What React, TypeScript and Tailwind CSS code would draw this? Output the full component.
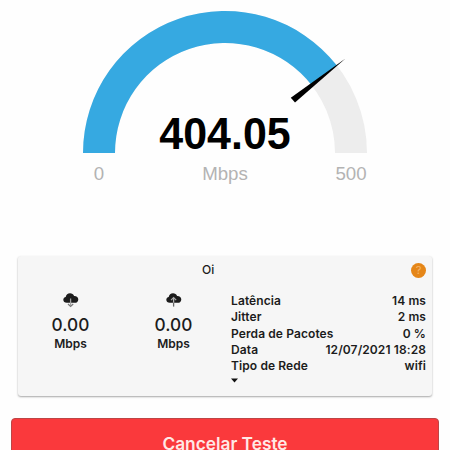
import type { ReactNode } from 'react';

const details = [
  { label: 'Latência', value: '14 ms' },
  { label: 'Jitter', value: '2 ms' },
  { label: 'Perda de Pacotes', value: '0 %' },
  { label: 'Data', value: '12/07/2021 18:28' },
  { label: 'Tipo de Rede', value: 'wifi' },
];

const CLOUD =
  'M3.8 9.8C1.700 9.800.3 8.600.3 6.800c0-1.500 1-2.600 2.400-2.800C3 1.800 4.800.2 7 .2c1.900 0 3.500 1 4.100 2.700 2.300-.2 4.200 1.300 4.200 3.500 0 2-1.500 3.400-3.600 3.400z';

const DownloadIcon = () => (
  <svg className="block" width="16" height="15" viewBox="0 0 16 15">
    <path d={CLOUD} fill="#1c1c1c" />
    <path d="M7.600 5.500v7" stroke="#a3a3a3" strokeWidth="1.300" />
    <path d="M5 11l2.600 2.400L10.200 11" fill="none" stroke="#777" strokeWidth="1.200" />
  </svg>
);

const UploadIcon = () => (
  <svg className="block" width="16" height="15" viewBox="0 0 16 15">
    <path d={CLOUD} fill="#1c1c1c" />
    <path d="M7.600 5v4.800" stroke="#b5b5b5" strokeWidth="1.300" />
    <path d="M7.600 9.800v3.800" stroke="#666" strokeWidth="1.300" />
    <path d="M5 7.200l2.600-2.600 2.600 2.600" fill="none" stroke="#aaa" strokeWidth="1.200" />
  </svg>
);

const Gauge = () => {
  return (
    <section className="h-[256px] w-full font-['Liberation_Sans',Arial,sans-serif]">
      <svg className="block" width="450" height="256" viewBox="0 0 450 256">
        <path d="M83 153A142 142 0 0 1 367 153H335A110 110 0 0 0 115 153Z" fill="#ededed" />
        <path d="M83 153A142 142 0 0 1 336.900 65.600L311.700 85.300A110 110 0 0 0 115 153Z" fill="#36a9e1" />
        <path d="M345.500 58.500L290.800 97.700L295 102.500Z" fill="#000" />
        <text
          transform="translate(225 149) scale(.955 1)"
          textAnchor="middle"
          fontSize="45"
          fontWeight="700"
        >
          404.05
        </text>
        <g fill="#b3b3b3" fontSize="18.700" textAnchor="middle">
          <text x="99" y="180">0</text>
          <text x="225" y="180">Mbps</text>
          <text x="351" y="180">500</text>
        </g>
      </svg>
    </section>
  );
};

const Speed = ({ icon }: { icon: ReactNode }) => (
  <div className="w-[103px] flex flex-col items-center">
    {icon}
    <p className="mt-[7px] text-[17.3px] leading-[20px] font-medium">0.00</p>
    <p className="mt-px text-[12px] leading-[16px] font-semibold">Mbps</p>
  </div>
);

const App = () => {
  return (
    <main className="w-[450px] h-[450px] overflow-hidden bg-[#fefefe] text-[#1c1c1c] font-[Inter,sans-serif]">
      <Gauge />
      <section className="ml-[18px] w-[414px] h-[140px] rounded-[3px] bg-[#f6f6f6] shadow-[0_1px_2px_rgba(0,0,0,0.35)]">
        <header className="h-[37px] pt-[7px] pl-[184px] pr-[6px] flex items-start justify-between">
          <h2 className="text-[12px] leading-[14px] font-medium">Oi</h2>
          <span className="size-[15px] rounded-full bg-[#e58618] text-[#f6b66b] text-[11px] leading-[15px] text-center">
            ?
          </span>
        </header>
        <div className="pl-px flex">
          <Speed icon={<DownloadIcon />} />
          <Speed icon={<UploadIcon />} />
          <div className="ml-[6px] w-[195px] text-[12px] leading-[16.3px] font-semibold tracking-[0.1px]">
            {details.map((item) => (
              <div key={item.label} className="flex justify-between whitespace-nowrap">
                <span>{item.label}</span>
                <span>{item.value}</span>
              </div>
            ))}
            <svg className="block mt-[4px]" width="7" height="5" viewBox="0 0 7 5">
              <path d="M0 .5h7L3.500 4.500z" fill="#111" />
            </svg>
          </div>
        </div>
      </section>
      <button className="block mt-[22px] ml-[11px] w-[428px] h-[50px] rounded-[4px] border border-[#bd4545] bg-[#fa393c] text-[#ffe9e6] text-[17.3px] leading-[49px] font-semibold">
        Cancelar Teste
      </button>
    </main>
  );
};

export default App;
